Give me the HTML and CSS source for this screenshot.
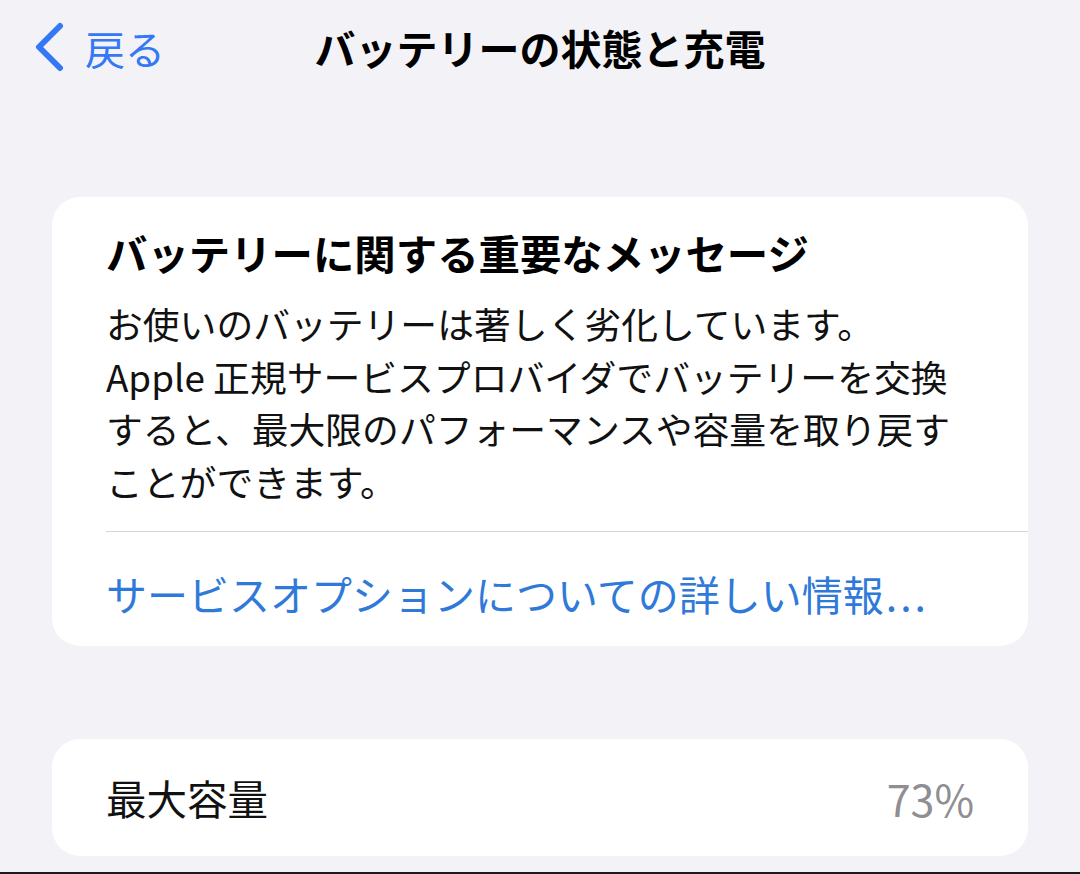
FILE: index.html
```html
<!DOCTYPE html>
<html lang="ja">
<head>
<meta charset="utf-8">
<link rel="stylesheet" href="styles.css">
</head>
<body>
<div class="screen">
  <header class="nav">
    <div class="back">
      <svg class="chev" width="32" height="52" viewBox="0 0 32 52"><path d="M26 4 L5 25 L26 46" fill="none" stroke="#3478f6" stroke-width="6" stroke-linecap="round" stroke-linejoin="round"/></svg>
      <span class="back-label">戻る</span>
    </div>
    <h1 class="title">バッテリーの状態と充電</h1>
  </header>

  <section class="card msg">
    <div class="msg-body">
      <h2 class="msg-title">バッテリーに関する重要なメッセージ</h2>
      <p class="msg-text">お使いのバッテリーは著しく劣化しています。<br>Apple 正規サービスプロバイダでバッテリーを交換<br>すると、最大限のパフォーマンスや容量を取り戻す<br>ことができます。</p>
    </div>
    <div class="divider"></div>
    <div class="link">サービスオプションについての詳しい情報<span class="dots">...</span></div>
  </section>

  <section class="card row">
    <span class="row-label">最大容量</span>
    <span class="row-value">73%</span>
  </section>
</div>
<div class="bottom-line"></div>
</body>
</html>
```

FILE: styles.css
```css
html, body {
  margin: 0;
  padding: 0;
}
body {
  background: #f2f2f7;
  font-family: "Noto Sans CJK JP", "Noto Sans", sans-serif;
  color: #000;
  width: 1080px;
  height: 874px;
  overflow: hidden;
  display: flex;
  flex-direction: column;
}
.screen {
  flex: 1;
  padding: 0 52px;
}
.nav {
  position: relative;
  height: 95px;
  display: flex;
  align-items: center;
  justify-content: center;
}
.back {
  position: absolute;
  left: -18px;
  top: 22px;
  display: flex;
  align-items: center;
  gap: 19px;
}
.chev {
  display: block;
}
.back-label {
  color: #3478f6;
  font-size: 40px;
  line-height: 52px;
}
.title {
  margin: 0;
  margin-top: -2px;
  font-size: 41px;
  font-weight: 700;
}
.card {
  background: #fff;
  border-radius: 28px;
}
.msg {
  margin-top: 102px;
}
.msg-body {
  padding: 28px 54px 0 54px;
}
.msg-title {
  margin: 0;
  font-size: 41.4px;
  line-height: 54px;
  font-weight: 700;
}
.msg-text {
  margin: 18px 0 0 0;
  font-size: 36.8px;
  line-height: 52.5px;
  color: #111;
}
.divider {
  height: 1px;
  background: #d6d6da;
  margin: 24px 0 0 54px;
}
.link {
  padding: 35px 54px 27px;
  font-size: 41px;
  line-height: 52px;
  color: #2f7ad9;
}
.dots {
  letter-spacing: 3px;
  margin-left: 2px;
}
.row {
  margin-top: 93px;
  height: 117px;
  display: flex;
  align-items: center;
  justify-content: space-between;
  padding: 0 54px;
}
.row-label {
  font-size: 40.5px;
  color: #111;
}
.row-value {
  font-size: 43px;
  color: #8e8e93;
}
.bottom-line {
  height: 2px;
  background: #1c1c1e;
}
```
